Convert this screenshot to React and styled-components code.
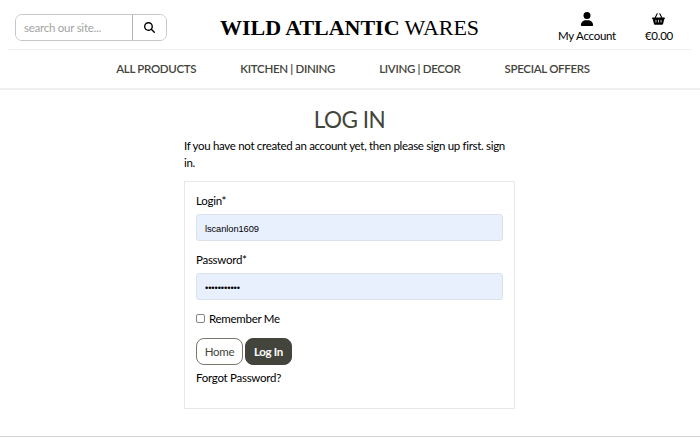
import React from "react";
import styled, { createGlobalStyle } from "styled-components";
import { FaUser, FaBasketShopping, FaMagnifyingGlass } from "react-icons/fa6";

const GlobalStyle = createGlobalStyle`
  *, *::before, *::after { box-sizing: border-box; }
  html { background: #fff; }
  body {
    margin: 0;
    overflow: hidden;
    background: #fff;
    color: #000;
    font-family: Lato, sans-serif;
    font-size: 11.5px;
    letter-spacing: -0.27px;
    line-height: 16px;
  }
  a { color: inherit; text-decoration: none; }
`;

const Page = styled.div`
  display: flex;
  flex-direction: column;
  height: 438px;
`;

const Header = styled.header`
  height: 90px;
  padding: 0 8px;
  border-bottom: 2px solid #efefef;
`;

const TopBar = styled.div`
  display: grid;
  grid-template-columns: 206px 1fr 206px;
  height: 50px;
  padding-top: 14px;
  border-bottom: 1px solid #f0f0f0;
`;

const SearchForm = styled.form`
  display: flex;
  width: 152px;
  height: 27px;
  margin-left: 7px;
  border: 1px solid #c6c6c6;
  border-radius: 7px;
  overflow: hidden;
`;

const SearchInput = styled.input`
  width: 117px;
  padding: 0 8px;
  border: 0;
  border-right: 1px solid #b4b4b4;
  background: #fff;
  font: 11.5px Lato, sans-serif;
  letter-spacing: -0.25px;
  outline: 0;
  &::placeholder { color: #a3a3a3; opacity: 1; }
`;

const SearchButton = styled.button`
  display: grid;
  place-items: center;
  flex: 1;
  padding: 0;
  border: 0;
  background: #fff;
  color: #000;
`;

const Brand = styled.a`
  justify-self: center;
  margin-right: 1px;
  font: 22px/27px "Liberation Serif", "Times New Roman", serif;
  letter-spacing: -0.03px;
  white-space: nowrap;
`;

const Links = styled.div`
  display: flex;
  justify-content: flex-end;
  gap: 29px;
  margin: -2px 19px 0 0;
`;

const IconLink = styled.a`
  display: flex;
  flex-direction: column;
  align-items: center;
  line-height: 17px;
  svg { margin-bottom: 1px; }
`;

const BasketIcon = styled(FaBasketShopping)`
  width: 13px;
  height: 14px;
`;

const Nav = styled.nav`
  display: flex;
  justify-content: center;
  gap: 44px;
  margin-left: 6px;
  color: #43443b;
  font-weight: 600;
  letter-spacing: -0.3px;
  line-height: 38px;
  white-space: nowrap;
`;

const Main = styled.main`
  width: 331px;
  margin: 0 0 0 184px;
  flex: 1;
`;

const Title = styled.h1`
  margin: 16px 0 5px;
  color: #43443b;
  font-size: 22.5px;
  font-weight: 400;
  letter-spacing: -0.5px;
  line-height: 27px;
  text-align: center;
`;

const Intro = styled.p`
  margin: 0;
  letter-spacing: -0.315px;
  line-height: 16.5px;
`;

const Card = styled.form`
  height: 228px;
  margin-top: 10px;
  padding: 11px 11px 0;
  border: 1px solid #e5e9ea;
`;

const Field = styled.label`
  display: block;
  margin-bottom: 11px;
`;

const FieldInput = styled.input`
  display: block;
  width: 100%;
  height: 27px;
  margin-top: 5px;
  padding: 3px 8px 0;
  border: 1px solid #dce2ec;
  border-radius: 3px;
  background: #e8f0fe;
  color: #000;
  font: 9.3px "Liberation Sans", Arial, sans-serif;
  letter-spacing: -0.08px;
  outline: 0;
`;

const Remember = styled.label`
  display: flex;
  align-items: flex-start;
  gap: 4px;
  height: 16px;
`;

const Checkbox = styled.input`
  appearance: none;
  width: 9px;
  height: 9px;
  margin: 3px 0 0;
  border: 1px solid #858585;
  border-radius: 2px;
  background: #fff;
`;

const Actions = styled.div`
  display: flex;
  gap: 2px;
  margin: 11px 0 5px;
`;

const Button = styled.button`
  width: 47px;
  height: 27px;
  padding: 0;
  border: 1px solid ${(p) => (p.$primary ? "#43443b" : "#77776d")};
  border-radius: 8px;
  background: ${(p) => (p.$primary ? "#43443b" : "#fff")};
  color: ${(p) => (p.$primary ? "#fff" : "#43443b")};
  font: ${(p) => (p.$primary ? 700 : 400)} 11.5px/24px Lato, sans-serif;
  letter-spacing: -0.3px;
`;

const Footer = styled.footer`
  height: 2px;
  border-top: 1px solid #d4d4d4;
`;

const categories = ["ALL PRODUCTS", "KITCHEN | DINING", "LIVING | DECOR", "SPECIAL OFFERS"];

export default function App() {
  return (
    <Page>
      <GlobalStyle />
      <Header>
        <TopBar>
          <SearchForm>
            <SearchInput placeholder="search our site..." />
            <SearchButton type="button" aria-label="Search"><FaMagnifyingGlass size={11} /></SearchButton>
          </SearchForm>
          <Brand href="#"><strong>WILD ATLANTIC</strong> WARES</Brand>
          <Links>
            <IconLink href="#"><FaUser size={14} />My Account</IconLink>
            <IconLink href="#"><BasketIcon />€0.00</IconLink>
          </Links>
        </TopBar>
        <Nav>
          {categories.map((name) => <a href="#" key={name}>{name}</a>)}
        </Nav>
      </Header>
      <Main>
        <Title>LOG IN</Title>
        <Intro>If you have not created an account yet, then please sign up first. sign in.</Intro>
        <Card>
          <Field>Login*<FieldInput defaultValue="lscanlon1609" /></Field>
          <Field>Password*<FieldInput type="password" defaultValue="passwordabc" /></Field>
          <Remember><Checkbox type="checkbox" />Remember Me</Remember>
          <Actions>
            <Button type="button">Home</Button>
            <Button type="button" $primary>Log In</Button>
          </Actions>
          <a href="#">Forgot Password?</a>
        </Card>
      </Main>
      <Footer />
    </Page>
  );
}
